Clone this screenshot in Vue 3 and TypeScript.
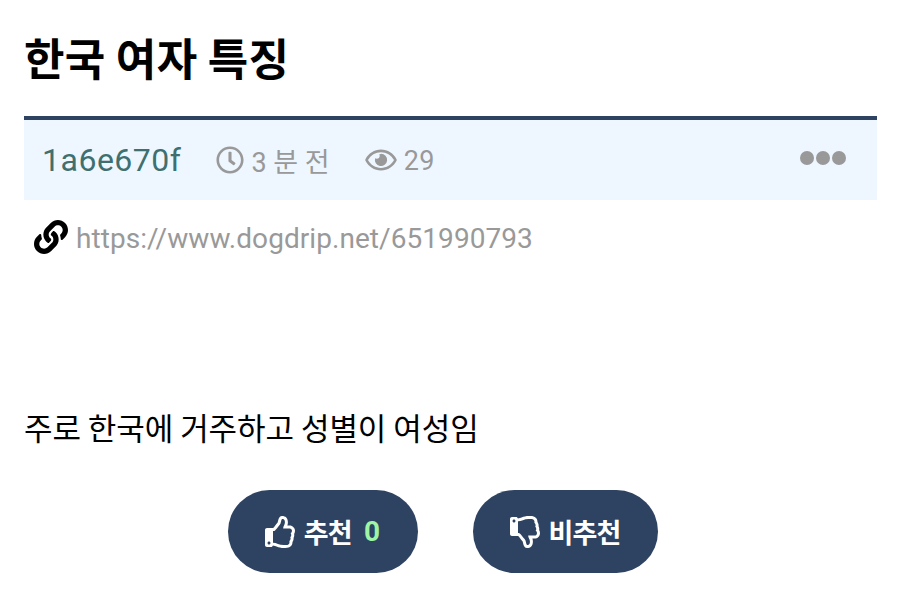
<script setup lang="ts">
const title: string = '한국 여자 특징'
const thumb: string = 'M466.27 286.69C475.04 271.84 480 256 480 236.85c0-44.015-37.218-85.58-85.82-85.58H357.7c4.92-12.81 8.85-28.13 8.85-46.54C366.55 31.936 328.86 0 271.28 0c-61.607 0-58.093 94.933-71.76 108.6-22.747 22.747-49.615 66.447-68.76 83.4H32c-17.673 0-32 14.327-32 32v240c0 17.673 14.327 32 32 32h64c14.893 0 27.408-10.174 30.978-23.95 44.509 1.001 75.06 39.94 177.802 39.94 7.22 0 15.22.01 22.22.01 77.117 0 111.986-39.423 112.94-95.33 13.319-18.425 20.299-43.122 17.34-66.99 9.854-18.452 13.664-40.343 8.99-62.99zm-61.75 53.83c12.56 21.13 1.26 49.41-13.94 57.57 7.7 48.78-17.608 65.9-53.12 65.9h-37.82c-71.639 0-118.029-37.82-171.64-37.82V240h10.92c28.36 0 67.98-70.89 94.54-97.46 28.36-28.36 18.91-75.63 37.82-94.54 47.27 0 47.27 32.98 47.27 56.73 0 39.17-28.36 56.72-28.36 94.54h103.99c21.11 0 37.73 18.91 37.82 37.82.09 18.9-12.82 37.81-22.27 37.81 13.489 14.555 16.371 45.236-5.21 65.62zM88 432c0 13.255-10.745 24-24 24s-24-10.745-24-24 10.745-24 24-24 24 10.745 24 24z'
</script>

<template>
  <div class="page">
    <h1 class="title">{{ title }}</h1>
    <div class="meta">
      <span class="author">1a6e670f</span>
      <span class="info time">
        <svg viewBox="0 0 512 512" width="28" height="28" fill="#999">
          <path d="M256 8C119 8 8 119 8 256s111 248 248 248 248-111 248-248S393 8 256 8zm0 448c-110.500 0-200-89.500-200-200S145.500 56 256 56s200 89.500 200 200-89.500 200-200 200zm61.800-104.400l-84.900-61.700c-3.100-2.300-4.900-5.900-4.900-9.700V116c0-6.600 5.400-12 12-12h32c6.600 0 12 5.400 12 12v141.700l66.800 48.600c5.400 3.900 6.500 11.400 2.600 16.800L334.600 349c-3.900 5.300-11.400 6.500-16.800 2.600z" />
        </svg>
        <span class="ko">3 분 전</span>
      </span>
      <span class="info views">
        <svg viewBox="0 0 576 512" width="32" height="28" fill="#999">
          <path d="M288 144a110.940 110.940 0 0 0-31.240 5 55.400 55.400 0 0 1 7.240 27 56 56 0 0 1-56 56 55.400 55.400 0 0 1-27-7.240A111.710 111.710 0 1 0 288 144zm284.520 97.400C518.290 135.590 410.930 64 288 64S57.680 135.640 3.480 241.410a32.350 32.350 0 0 0 0 29.190C57.710 376.410 165.070 448 288 448s230.320-71.640 284.520-177.410a32.350 32.350 0 0 0 0-29.190zM288 400c-98.650 0-189.090-55-237.930-144C98.910 167 189.340 112 288 112s189.090 55 237.930 144C477.100 345 386.660 400 288 400z" />
        </svg>
        <span>29</span>
      </span>
      <span class="dots"><i></i><i></i><i></i></span>
    </div>
    <div class="link">
      <svg class="link-icon" viewBox="0 0 512 512" width="34" height="34" fill="#000">
        <path d="M326.612 185.391c59.747 59.809 58.927 155.698.36 214.59-.11.12-.24.25-.36.37l-67.2 67.2c-59.27 59.27-155.699 59.262-214.96 0-59.27-59.26-59.27-155.7 0-214.96l37.106-37.106c9.84-9.84 26.786-3.3 27.294 10.606.648 17.722 3.826 35.527 9.69 52.721 1.986 5.822.567 12.262-3.783 16.612l-13.087 13.087c-28.026 28.026-28.905 73.66-1.155 101.96 28.024 28.579 74.086 28.749 102.325.51l67.2-67.19c28.191-28.191 28.073-73.757 0-101.83-3.701-3.694-7.429-6.564-10.341-8.569a16.037 16.037 0 0 1-6.947-12.606c-.396-10.567 3.348-21.456 11.698-29.806l21.054-21.055c5.521-5.521 14.182-6.199 20.584-1.731a152.482 152.482 0 0 1 20.522 17.197zM467.547 44.449c-59.261-59.262-155.69-59.27-214.96 0l-67.2 67.2c-.12.12-.25.25-.36.37-58.566 58.892-59.387 154.781.36 214.59a152.454 152.454 0 0 0 20.521 17.196c6.402 4.468 15.064 3.789 20.584-1.731l21.054-21.055c8.35-8.35 12.094-19.239 11.698-29.806a16.037 16.037 0 0 0-6.947-12.606c-2.912-2.005-6.64-4.875-10.341-8.569-28.073-28.073-28.191-73.639 0-101.83l67.2-67.19c28.239-28.239 74.3-28.069 102.325.51 27.75 28.3 26.872 73.934-1.155 101.96l-13.087 13.087c-4.35 4.35-5.769 10.79-3.783 16.612 5.864 17.194 9.042 34.999 9.69 52.721.509 13.906 17.454 20.446 27.294 10.606l37.106-37.106c59.271-59.259 59.271-155.699.001-214.959z" />
      </svg>
      <span class="url">https://www.dogdrip.net/651990793</span>
    </div>
    <p class="body-text">주로 한국에 거주하고 성별이 여성임</p>
    <div class="votes">
      <button class="vote up" type="button">
        <svg viewBox="0 0 480 512" width="30" height="32" fill="#fff">
          <path :d="thumb" />
        </svg>
        <span class="label">추천</span>
        <span class="count">0</span>
      </button>
      <button class="vote down" type="button">
        <svg viewBox="0 0 480 512" width="30" height="32" fill="#fff">
          <path :d="thumb" transform="matrix(1 0 0 -1 0 512)" />
        </svg>
        <span class="label">비추천</span>
      </button>
    </div>
  </div>
</template>

<style>
html, body { margin: 0; background: #fff; }
</style>

<style scoped>
.page {
  width: 900px;
  height: 614px;
  box-sizing: border-box;
  padding: 0 23px 0 24px;
  font-family: Roboto, "Noto Sans CJK KR", sans-serif;
  overflow: hidden;
}
.title {
  margin: 0;
  padding-top: 31px;
  height: 116px;
  box-sizing: border-box;
  font-size: 44px;
  line-height: 52px;
  font-weight: 700;
  color: #000;
  font-family: "Noto Sans CJK KR", sans-serif;
  letter-spacing: 0.3px;
}
.meta {
  display: flex;
  align-items: center;
  height: 84px;
  box-sizing: border-box;
  border-top: 4px solid #2e4361;
  background: #eef7ff;
  padding: 0 31px 0 18px;
  color: #999;
  font-size: 27px;
}
.author { font-size: 32px; color: #3f6f6f; letter-spacing: 0.5px; margin-right: 35px; }
.info { display: flex; align-items: center; gap: 6px; }
.time { margin-right: 35px; }
.time .ko { margin-left: 1px; }
.views span { letter-spacing: 0.3px; margin: 2px 0 0 1px; }
.dots { margin-left: auto; display: flex; gap: 2px; margin-bottom: 4px; }
.dots i { width: 14px; height: 14px; border-radius: 50%; background: #999; display: block; }
.link { display: flex; align-items: center; height: 76px; padding-left: 10px; gap: 8px; }
.link-icon { margin-top: -3px; }
.url { font-size: 28px; color: #999; letter-spacing: 0.06px; }
.body-text {
  margin: 0;
  padding-top: 129px;
  font-size: 31px;
  line-height: 44px;
  font-family: "Noto Sans CJK KR", sans-serif;
  color: #000;
  letter-spacing: -0.05px;
}
.votes { display: flex; gap: 55px; margin-top: 41px; padding-left: 204px; }
.vote {
  height: 83px;
  border: 0;
  border-radius: 42px;
  background: #2e4361;
  color: #fff;
  display: flex;
  align-items: center;
  justify-content: center;
  padding: 0;
  font-family: "Noto Sans CJK KR", sans-serif;
  font-size: 27px;
  font-weight: 700;
  letter-spacing: -0.8px;
}
.up { width: 190px; }
.down { width: 185px; }
.up .label { margin-left: 9px; }
.up svg { margin-left: -2px; }
.down .label { margin-left: 8px; }
.down svg { margin-left: 0; }
.count { color: #9df5a5; margin-left: 12px; font-family: Roboto, sans-serif; font-size: 28px; }
</style>
